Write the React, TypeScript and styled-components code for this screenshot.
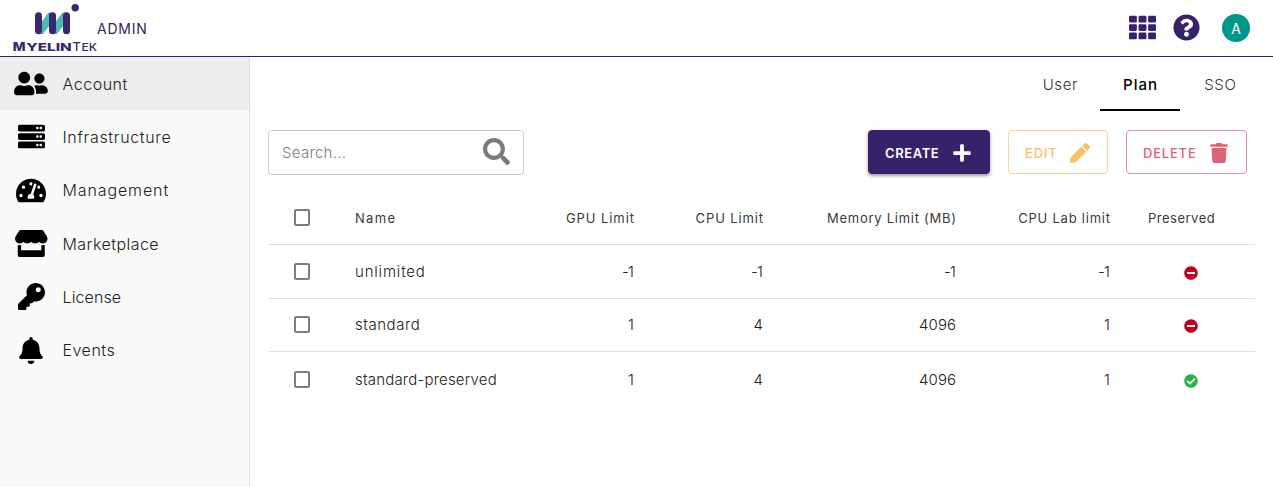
import React from "react";
import styled, { createGlobalStyle } from "styled-components";
import {
  FaUserFriends, FaServer, FaTachometerAlt, FaStore, FaKey, FaBell, FaTh,
  FaQuestionCircle, FaSearch, FaPlus, FaPen, FaTrash, FaMinusCircle, FaCheckCircle,
} from "react-icons/fa";

const GlobalStyle = createGlobalStyle`
  * { box-sizing: border-box; }
  body { margin: 0; background: #fff; color: #212121; font-family: Inter, "Open Sans", sans-serif; }
`;

const Page = styled.div`
  display: flex;
  flex-direction: column;
  height: 100vh;
  overflow: hidden;
`;

const Header = styled.header`
  display: flex;
  align-items: center;
  justify-content: space-between;
  flex: none;
  height: 57px;
  padding: 0 23px 0 12px;
  border-bottom: 1px solid #36225f;
`;

const Brand = styled.div`
  display: flex;
  align-items: center;
`;

const Logo = styled.svg`
  display: block;
  width: 86px;
  height: 56px;
  margin-right: -1px;
`;

const Actions = styled.div`
  display: flex;
  align-items: center;
  color: #36226b;
`;

const GridIcon = styled(FaTh)`
  margin-bottom: 2px;
`;

const HelpIcon = styled(FaQuestionCircle)`
  margin: 0 0 2px 17px;
`;

const Avatar = styled.div`
  display: flex;
  align-items: center;
  justify-content: center;
  width: 28px;
  height: 28px;
  margin-left: 22px;
  border-radius: 50%;
  background: #009688;
  color: #fff;
  font-size: 14px;
`;

const Label = styled.span<{ $ls?: number }>`
  display: inline-block;
  white-space: nowrap;
  letter-spacing: ${(p) => p.$ls ?? 0}px;
  margin-right: ${(p) => -(p.$ls ?? 0)}px;
`;

const AppName = styled(Label)`
  color: #36225f;
  font-size: 14px;
`;

const Body = styled.div`
  display: flex;
  flex: 1;
  min-height: 0;
`;

const Sidebar = styled.nav`
  width: 250px;
  flex: none;
  background: #fafafa;
  border-right: 1px solid #e0e0e0;
`;

const NavItem = styled.a<{ $active?: boolean }>`
  display: flex;
  align-items: center;
  height: 53.33px;
  font-size: 16px;
  font-weight: 300;
  background: ${(p) => (p.$active ? "#ededed" : "transparent")};
`;

const NavIcon = styled.span<{ $width: number }>`
  display: flex;
  justify-content: center;
  width: 62.5px;
  color: #000;
  svg {
    flex: none;
    width: ${(p) => p.$width}px;
    height: 27px;
  }
`;

const Main = styled.main`
  flex: 1;
  min-width: 0;
  padding: 0 18px;
`;

const Tabs = styled.div`
  display: flex;
  justify-content: flex-end;
  height: 54px;
  margin-right: -5px;
`;

const Tab = styled.div<{ $active?: boolean }>`
  display: flex;
  align-items: center;
  justify-content: center;
  width: 80px;
  padding-top: 2px;
  border-bottom: 2px solid ${(p) => (p.$active ? "#000" : "transparent")};
  color: ${(p) => (p.$active ? "#000" : "#333")};
  font-size: 15px;
  font-weight: ${(p) => (p.$active ? 500 : 300)};
`;

const Toolbar = styled.div`
  display: flex;
  align-items: flex-start;
  gap: 18px;
  margin-top: 19px;
  padding-right: 8px;
`;

const SearchBox = styled.div`
  display: flex;
  align-items: center;
  justify-content: space-between;
  width: 256px;
  height: 45px;
  margin-right: auto;
  padding: 0 13px;
  border: 1px solid #cacaca;
  border-radius: 4px;
  color: #7a7a7a;
  font-size: 15px;
  font-weight: 300;
`;

const SearchIcon = styled(FaSearch)`
  margin-bottom: 2px;
`;

const Button = styled.button<{ $color: string; $border?: string; $width: number; $filled?: boolean }>`
  display: flex;
  align-items: center;
  justify-content: space-between;
  width: ${(p) => p.$width}px;
  height: 44px;
  padding: 1px 17px 0 16px;
  border: 1px solid ${(p) => p.$border ?? p.$color};
  border-radius: 4px;
  background: ${(p) => (p.$filled ? p.$color : "#fff")};
  color: ${(p) => (p.$filled ? "#fff" : p.$color)};
  box-shadow: ${(p) => (p.$filled ? "0 2px 3px rgba(0, 0, 0, 0.3), 0 1px 5px rgba(0, 0, 0, 0.12)" : "none")};
  font-family: inherit;
  font-size: 13px;
  font-weight: ${(p) => (p.$filled ? 600 : 500)};
`;

const Table = styled.div`
  margin-top: 16px;
`;

const Row = styled.div<{ $head?: boolean; $last?: boolean }>`
  display: grid;
  grid-template-columns: 87px 150px 129px 129px 193px 154px 1fr;
  align-items: center;
  height: ${(p) => (p.$head ? 54 : p.$last ? 55 : 53.5)}px;
  border-bottom: 1px solid ${(p) => (p.$last ? "transparent" : "#e0e0e0")};
  font-size: ${(p) => (p.$head ? 13 : 15)}px;
  font-weight: ${(p) => (p.$head ? 400 : 300)};
  color: ${(p) => (p.$head ? "#3a3a3a" : "#212121")};
`;

const Cell = styled.div<{ $right?: boolean }>`
  text-align: ${(p) => (p.$right ? "right" : "left")};
`;

const PreservedHead = styled.div`
  padding-left: 38px;
`;

const Status = styled.div<{ $ok: boolean }>`
  display: flex;
  justify-content: center;
  padding: 3px 0 0 16px;
  color: ${(p) => (p.$ok ? "#28b14c" : "#c00020")};
`;

const Checkbox = styled.div`
  width: 16px;
  height: 17px;
  margin-left: 26px;
  border: 2px solid #7c7c7c;
  border-radius: 2px;
`;

const nav = [
  { name: "Account", icon: FaUserFriends, width: 34, ls: 0.52 },
  { name: "Infrastructure", icon: FaServer, width: 27, ls: 0.65 },
  { name: "Management", icon: FaTachometerAlt, width: 30, ls: 0.88 },
  { name: "Marketplace", icon: FaStore, width: 32.5, ls: 0.45 },
  { name: "License", icon: FaKey, width: 27, ls: 0.1 },
  { name: "Events", icon: FaBell, width: 24, ls: 0.5 },
];

const columns: [string, number][] = [
  ["GPU Limit", 0.93],
  ["CPU Limit", 0.87],
  ["Memory Limit (MB)", 0.73],
  ["CPU Lab limit", 0.77],
];

const plans = [
  { name: "unlimited", ls: 0.82, values: ["-1", "-1", "-1", "-1"], ok: false },
  { name: "standard", ls: 0.55, values: ["1", "4", "4096", "1"], ok: false },
  { name: "standard-preserved", ls: 0.2, values: ["1", "4", "4096", "1"], ok: true },
];

function BrandLogo() {
  return (
    <Logo viewBox="12 0 86 56">
      <path d="M40 24L48.5 12.5H53V21L43 34H38ZM54 24L62.5 12.5H67V21L57 34H52Z" fill="#4bbcb4" />
      <g fill="#3b2670">
        <rect x="35" y="12.3" width="7" height="22" rx="3.5" />
        <rect x="49" y="12.3" width="7" height="22" rx="3.5" />
        <rect x="63" y="12.3" width="7" height="22" rx="3.5" />
        <circle cx="75.2" cy="7.8" r="3.7" />
        <g fontFamily="Inter, sans-serif" fontWeight="800">
          <text x="12.8" y="51" fontSize="12.3" textLength="12.8" lengthAdjust="spacingAndGlyphs">M</text>
          <text x="26.3" y="51" fontSize="10.6" textLength="45.5" lengthAdjust="spacingAndGlyphs">YELIN</text>
        </g>
        <g fontFamily="Inter, sans-serif" fontWeight="500">
          <text x="72.4" y="51" fontSize="12.3" textLength="8.3" lengthAdjust="spacingAndGlyphs">T</text>
          <text x="81.4" y="51" fontSize="10.6" textLength="15.6" lengthAdjust="spacingAndGlyphs">EK</text>
        </g>
      </g>
    </Logo>
  );
}

export default function App() {
  return (
    <Page>
      <GlobalStyle />
      <Header>
        <Brand>
          <BrandLogo />
          <AppName $ls={0.75}>ADMIN</AppName>
        </Brand>
        <Actions>
          <GridIcon size={27} />
          <HelpIcon size={27} />
          <Avatar>A</Avatar>
        </Actions>
      </Header>
      <Body>
        <Sidebar>
          {nav.map(({ name, icon: Icon, width, ls }, i) => (
            <NavItem key={name} $active={i === 0}>
              <NavIcon $width={width}><Icon /></NavIcon>
              <Label $ls={ls}>{name}</Label>
            </NavItem>
          ))}
        </Sidebar>
        <Main>
          <Tabs>
            <Tab><Label $ls={0.6}>User</Label></Tab>
            <Tab $active><Label $ls={1}>Plan</Label></Tab>
            <Tab><Label $ls={0.7}>SSO</Label></Tab>
          </Tabs>
          <Toolbar>
            <SearchBox>
              <Label $ls={0.3}>Search...</Label>
              <SearchIcon size={27} />
            </SearchBox>
            <Button $color="#36226b" $width={122} $filled>
              <Label $ls={0.6}>CREATE</Label><FaPlus size={20} />
            </Button>
            <Button $color="#fdc065" $border="#fdd28f" $width={100}>
              <Label $ls={0.8}>EDIT</Label><FaPen size={20} />
            </Button>
            <Button $color="#dc6474" $border="#e58f9a" $width={121}>
              <Label $ls={0.8}>DELETE</Label><FaTrash size={20} />
            </Button>
          </Toolbar>
          <Table>
            <Row $head>
              <Checkbox />
              <Cell><Label $ls={1.3}>Name</Label></Cell>
              {columns.map(([name, ls]) => (
                <Cell key={name} $right><Label $ls={ls}>{name}</Label></Cell>
              ))}
              <PreservedHead><Label $ls={0.5}>Preserved</Label></PreservedHead>
            </Row>
            {plans.map((plan, i) => (
              <Row key={plan.name} $last={i === plans.length - 1}>
                <Checkbox />
                <Cell><Label $ls={plan.ls}>{plan.name}</Label></Cell>
                {plan.values.map((value, j) => (
                  <Cell key={j} $right><Label $ls={value === "-1" ? -0.8 : 0.05}>{value}</Label></Cell>
                ))}
                <Status $ok={plan.ok}>
                  {plan.ok ? <FaCheckCircle size={14} /> : <FaMinusCircle size={14} />}
                </Status>
              </Row>
            ))}
          </Table>
        </Main>
      </Body>
    </Page>
  );
}
